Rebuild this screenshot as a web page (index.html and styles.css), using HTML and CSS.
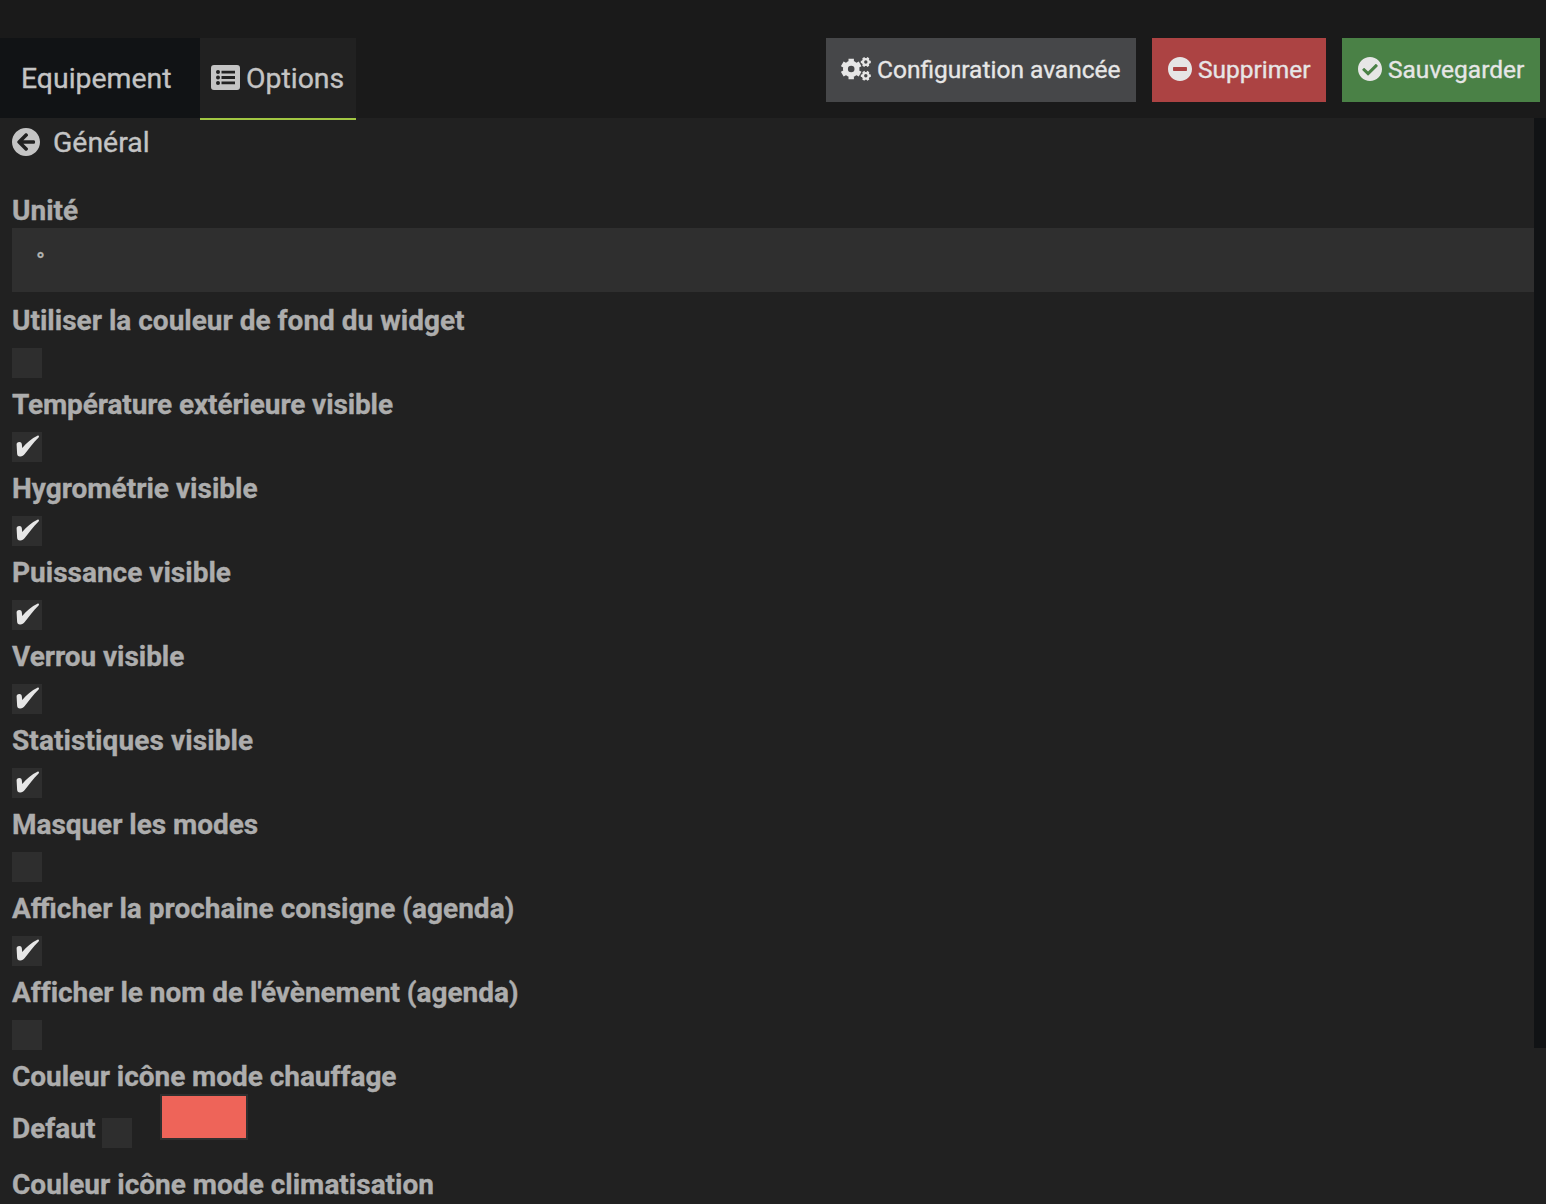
FILE: index.html
```html
<!DOCTYPE html>
<html lang="fr">
<head>
<meta charset="utf-8">
<title>Options</title>
<link rel="stylesheet" href="styles.css">
</head>
<body>
<svg class="defs" width="0" height="0">
  <symbol id="check" viewBox="0 0 30 30"><path d="M4.6 12.6C4.5 10.8 5.5 9.900 7.300 9.900C9.200 9.900 9.800 11 9.900 12.700L10.200 16.100C14.600 10.800 19.700 6.500 25.400 3.700C26.800 3.200 27.600 4.100 26.600 5.400C21.200 10.500 17 16.400 12.700 22.100C11.500 23.800 10 24.500 8 24.400C6 24.300 5.200 23.300 5.100 21.400Z"/></symbol>
</svg>
<header class="topbar">
  <nav class="tabs">
    <a class="tab tab-first">Equipement</a>
    <a class="tab tab-active"><svg class="list-icon" viewBox="0 0 29 25"><path fill-rule="evenodd" d="M3 0H26Q29 0 29 3V22Q29 25 26 25H3Q0 25 0 22V3Q0 0 3 0ZM10.5 5.700V8.500H24V5.700ZM10.5 11.100V13.900H24V11.100ZM10.5 16.500V19.300H24V16.500Z"/><g class="holes"><circle cx="7" cy="7.1" r="2"/><circle cx="7" cy="12.5" r="2"/><circle cx="7" cy="17.9" r="2"/></g></svg><span>Options</span></a>
  </nav>
  <div class="actions">
    <button class="btn btn-config"><svg class="cogs" viewBox="0 0 30 24"><g fill="none" stroke="currentColor">
      <circle cx="10.2" cy="12" r="5.8" stroke-width="5"/><path stroke-width="5.4" stroke-linejoin="round" d="M10.2 4.8V1.7M10.2 19.2V22.3M4 8.4L1.3 6.85M16.4 15.6L19.1 17.15M4 15.6L1.3 17.15M16.4 8.4L19.1 6.85"/>
      <g id="small-cog"><circle cx="24.8" cy="5" r="2.8" stroke-width="2.2"/><path stroke-width="2.5" d="M21.6 5H19.8M28 5H29.8M23.2 2.2L22.3 .7M26.4 2.2L27.3 .7M23.2 7.8L22.3 9.3M26.4 7.8L27.3 9.3"/></g>
      <use href="#small-cog" y="13.8"/></g></svg><span>Configuration avancée</span></button>
    <button class="btn btn-delete"><svg class="round-icon" viewBox="8 8 496 496"><path d="M256 8C119 8 8 119 8 256s111 248 248 248 248-111 248-248S393 8 256 8zM124 296c-6.600 0-12-5.400-12-12v-56c0-6.600 5.400-12 12-12h264c6.600 0 12 5.400 12 12v56c0 6.600-5.400 12-12 12H124z"/></svg><span>Supprimer</span></button>
    <button class="btn btn-save"><svg class="round-icon" viewBox="8 8 496 496"><path d="M504 256c0 136.967-111.033 248-248 248S8 392.967 8 256 119.033 8 256 8s248 111.033 248 248zM227.314 387.314l184-184c6.248-6.248 6.248-16.379 0-22.627l-22.627-22.627c-6.248-6.249-16.379-6.249-22.628 0L216 308.118l-70.059-70.059c-6.248-6.248-16.379-6.248-22.628 0l-22.627 22.627c-6.248 6.248-6.248 16.379 0 22.627l104 104c6.249 6.249 16.379 6.249 22.628.001z"/></svg><span>Sauvegarder</span></button>
  </div>
</header>
<div class="content">
  <main class="panel">
    <h1 class="title"><svg class="back" viewBox="8 8 496 496"><path d="M256 504C119 504 8 393 8 256S119 8 256 8s248 111 248 248-111 248-248 248zm28.900-143.600L209.400 288H392c13.300 0 24-10.700 24-24v-16c0-13.300-10.700-24-24-24H209.400l75.500-72.400c9.700-9.300 9.900-24.800.4-34.300l-11-10.900c-9.400-9.400-24.600-9.400-33.900 0L107.700 239c-9.400 9.400-9.400 24.600 0 33.900l132.700 132.700c9.400 9.400 24.600 9.400 33.900 0l11-10.900c9.500-9.500 9.300-25-.4-34.300z"/></svg><span>Général</span></h1>
    <div class="unit"><label class="label">Unité</label><div class="input">°</div></div>
    <div class="row"><label class="label">Utiliser la couleur de fond du widget</label><span class="box"></span></div>
    <div class="row"><label class="label tight">Température extérieure visible</label><span class="box"><svg><use href="#check"/></svg></span></div>
    <div class="row"><label class="label">Hygrométrie visible</label><span class="box"><svg><use href="#check"/></svg></span></div>
    <div class="row"><label class="label">Puissance visible</label><span class="box"><svg><use href="#check"/></svg></span></div>
    <div class="row"><label class="label snug">Verrou visible</label><span class="box"><svg><use href="#check"/></svg></span></div>
    <div class="row"><label class="label wide">Statistiques visible</label><span class="box"><svg><use href="#check"/></svg></span></div>
    <div class="row"><label class="label snug">Masquer les modes</label><span class="box"></span></div>
    <div class="row"><label class="label">Afficher la prochaine consigne (agenda)</label><span class="box"><svg><use href="#check"/></svg></span></div>
    <div class="row"><label class="label snug">Afficher le nom de l'évènement (agenda)</label><span class="box"></span></div>
    <div class="color-row"><label class="label snug">Couleur icône mode chauffage</label>
      <div class="color-line"><label class="label default">Defaut</label><span class="box color-box"></span><span class="swatch"></span></div>
    </div>
    <label class="label">Couleur icône mode climatisation</label>
  </main>
  <div class="scrollbar"></div>
</div>
</body>
</html>
```
FILE: styles.css
```css
* { box-sizing: border-box; }
body { margin: 0; height: 1204px; overflow: hidden; background: #212121; color: #c4c4c4; font-family: Roboto, sans-serif; font-size: 28.4px; -webkit-text-stroke: .35px currentColor; }
svg { display: block; flex: none; fill: currentColor; }
.defs { position: absolute; }
.topbar { display: flex; justify-content: space-between; height: 118px; padding: 38px 6px 0 0; background: #1a1a1a; }
.tabs { display: flex; }
.tab { display: flex; align-items: center; height: 80px; }
.tab-first { width: 200px; padding-left: 21px; background: #111315; }
.tab-active { width: 156px; height: 82px; padding: 0 0 0 11px; gap: 6px; background: #212121; border-bottom: 2px solid #a2c743; }
.list-icon { width: 29px; height: 25px; margin-bottom: 2px; }
.holes { fill: #212121; }
.actions { display: flex; gap: 16px; }
.btn { display: flex; align-items: center; height: 64px; padding: 0 0 2px 16px; gap: 6px; border: 0; color: #e6e6e6; font: 24.5px Roboto, sans-serif; white-space: nowrap; -webkit-text-stroke: .35px currentColor; }
.btn-config { width: 310px; padding-left: 15px; background: #464749; }
.btn-delete { width: 174px; background: #ac4343; }
.btn-save { width: 198px; background: #4a8146; }
.cogs { width: 30px; height: 24px; }
.round-icon { width: 24px; height: 24px; }
.content { display: flex; height: 1086px; }
.panel { flex: 1; padding-left: 12px; }
.scrollbar { width: 12px; height: 930px; background: #111315; }
.title { display: flex; align-items: center; gap: 13px; height: 48px; margin: 0 0 24px; font-size: 28.4px; font-weight: 400; }
.back { width: 28px; height: 28px; margin-bottom: 1px; }
.label { display: block; height: 40px; line-height: 42px; font-size: 28px; font-weight: 700; color: #adadad; white-space: nowrap; }
.tight { letter-spacing: -.12px; }
.snug { letter-spacing: -.05px; }
.wide { letter-spacing: .09px; }
.unit { height: 110px; }
.unit .label { height: 38px; }
.input { height: 64px; padding-left: 24px; line-height: 67px; background: #2f2f2f; color: #b5b5b5; font-size: 24px; }
.row { height: 84px; }
.box { display: block; width: 30px; height: 30px; margin-top: 8px; background: #2e2e2e; color: #e6e6e6; }
.box svg { width: 30px; height: 30px; }
.color-row { height: 108px; }
.color-line { display: flex; align-items: flex-start; }
.default { width: 90px; margin-top: 12px; }
.color-box { margin-top: 22px; }
.swatch { width: 88px; height: 46px; margin: -2px 0 0 28px; background: #ee6459; border: 2px solid #2f2f2f; }
```
